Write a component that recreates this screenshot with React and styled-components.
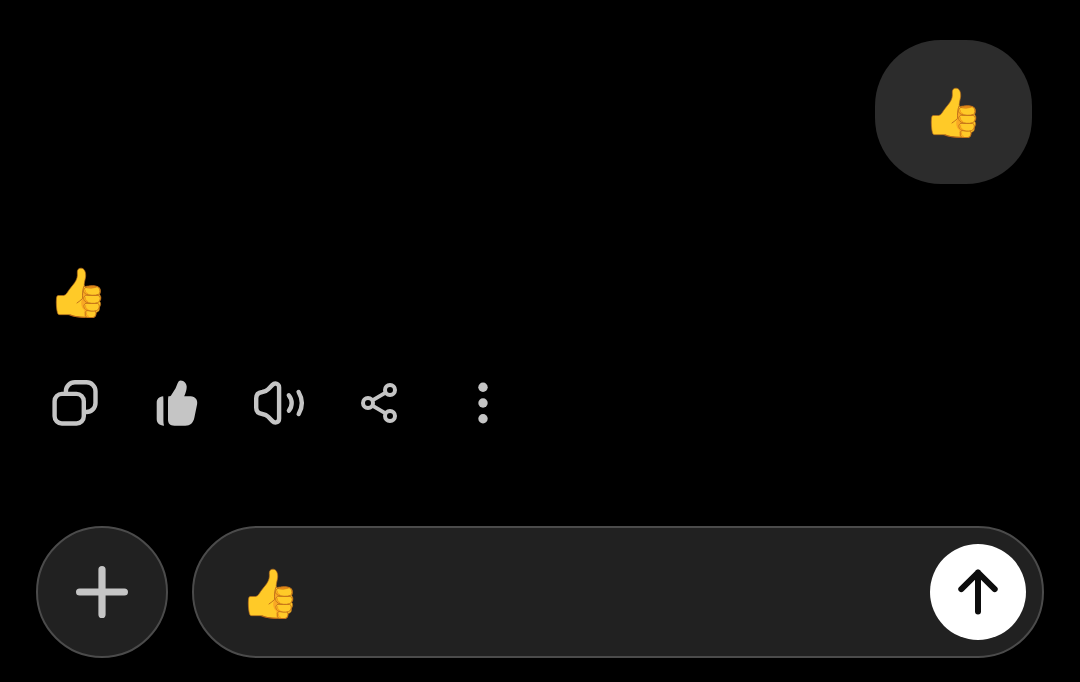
import React from "react";
import styled, { createGlobalStyle } from "styled-components";

const GlobalStyle = createGlobalStyle`
  * {
    box-sizing: border-box;
  }
  body {
    margin: 0;
    background: #000;
    font-family: Roboto, "Liberation Sans", sans-serif;
  }
`;

const Screen = styled.main`
  display: flex;
  flex-direction: column;
  width: 1080px;
  height: 682px;
  padding: 40px 36px 24px;
  overflow: hidden;
  background: #000;
`;

const UserMessage = styled.div`
  display: flex;
  align-items: center;
  align-self: flex-end;
  justify-content: center;
  width: 157px;
  height: 144px;
  margin-right: 12px;
  padding-top: 2px;
  border-radius: 66px;
  background: #2c2c2c;
`;

const Reply = styled.div`
  display: flex;
  margin: 82px 0 0 19px;
`;

const Actions = styled.div`
  display: flex;
  margin: 41px 0 0 -12px;
`;

const IconButton = styled.button`
  display: flex;
  align-items: center;
  justify-content: center;
  width: 102px;
  height: 84px;
  padding: 0;
  border: none;
  background: none;
  color: #c5c5c5;
`;

const Composer = styled.div`
  display: flex;
  gap: 24px;
  margin-top: auto;
`;

const AddButton = styled(IconButton)`
  width: 132px;
  height: 132px;
  border: 2px solid #4b4b4b;
  border-radius: 50%;
  background: #212121;
`;

const Field = styled.div`
  display: flex;
  flex: 1;
  align-items: center;
  justify-content: space-between;
  height: 132px;
  padding: 0 16px 0 53px;
  border: 2px solid #4b4b4b;
  border-radius: 66px;
  background: #212121;
`;

const Draft = styled.div`
  display: flex;
  padding-top: 4px;
`;

const SendButton = styled(IconButton)`
  width: 96px;
  height: 96px;
  border-radius: 50%;
  background: #fff;
  color: #0d0d0d;
`;

const Icon = styled.svg`
  display: block;
  flex: none;
  width: ${(props) => props.$size || 60}px;
  height: ${(props) => props.$size || 60}px;
  fill: none;
  stroke: currentColor;
  stroke-width: ${(props) => props.$stroke || 4.4};
  stroke-linecap: round;
  stroke-linejoin: round;
`;

const Emoji = styled.svg`
  display: block;
  flex: none;
  width: 48px;
  height: 54px;
`;

const ThumbsUp = () => (
  <Emoji viewBox="0 0 144 162" role="img" aria-label="thumbs up">
    <path
      d="M78 6.5C70 6.5 66 12 67 20C68 31 66 40 59 50C52 60 42 70 36 81Q32 88 26 88.500H9Q5 89 4.500 96C3 112 4.500 130 7.500 141Q9 146.500 14 146H39C50 146 54 151 67 152.500C81 155 96 154.500 110 154.500C120 155.500 124 150 123 140C131 138 135 132 133 124C138 119 138 111 134 106C139 100 139 91 134 86C137 80 138 69 132 64C124 58 104 58 89 62C85 55 91 42 92 31C93 16 87 6.500 78 6.500Z"
      fill="#ffca28"
      stroke="#b56d1c"
      strokeWidth="2"
    />
    <path d="M82 97C76 108 78 126 88 132L89 152H100L98 66H86Z" fill="#f9a825" />
    <g fill="#ffca28" stroke="#bd6717" strokeWidth="2.600" strokeLinejoin="round">
      <path d="M95 134H118Q124 135 123 143Q122 154 114 154.500H99Q92 154 91 148Q89 136 95 134Z" />
      <path d="M93 112H128Q134 114 133 123Q132 132 124 134C113 137 103 135 95 132C85 128 84 115 93 112Z" />
      <path d="M94 88H129Q137 90 136 98Q135 108 128 110C116 114 103 112 93 108C83 103 85 89 94 88Z" />
      <path d="M89 67C96 59 127 57 132 66C136 73 136 81 131 85C119 90 103 88 93 84C85 81 84 74 89 67Z" />
    </g>
    <g fill="none" stroke="#f59f1d" strokeWidth="3.500" strokeLinecap="round">
      <path d="M91 73C89 78 93 81 98 83M91 95C89 101 92 104 98 107M92 119C90 125 94 129 99 131M95 140C93 145 95 150 100 151" />
    </g>
    <path
      d="M66 111C72 107 77 103 83 97C82 84 82 73 87 60"
      fill="none"
      stroke="#b86518"
      strokeWidth="2.600"
      strokeLinecap="round"
    />
    <path
      d="M91 64C100 68 116 67 127 62C113 59 101 60 91 64Z"
      fill="#ed9418"
      stroke="#bd6717"
      strokeWidth="1.500"
    />
    <path
      d="M44 146C53 151 70 153 90 154"
      fill="none"
      stroke="#b86518"
      strokeWidth="3.500"
    />
  </Emoji>
);

const CopyIcon = () => (
  <Icon viewBox="0 0 60 60">
    <rect x="9.6" y="20.9" width="29.2" height="29.6" rx="7.3" />
    <path
      d="M20.9 20V18.2A9 9 0 0 1 29.900 9.300H41.5A9 9 0 0 1 50.5 18.300V30A9 9 0 0 1 41.5 39H39.5"
      strokeLinecap="butt"
    />
  </Icon>
);

const LikedIcon = () => (
  <Icon viewBox="0 0 60 60">
    <g fill="currentColor" stroke="none">
      <path d="M16.2 23.3C12 23.8 9.7 26 9.7 30V46C9.7 50 12.2 52.2 17 52.7C16.6 51 16.4 49.5 16.4 47.5V28.5C16.4 26.5 16.4 25 16.2 23.3Z" />
      <path d="M21.4 23.3H22.2C23.3 23.3 23.9 22.8 24.5 21.8L28.6 15.2L30.4 10.8C31.2 8.6 32.2 7.4 33.7 7.4C37.2 7.4 39.7 10.4 39.7 13.8C39.7 16.5 38.8 20 37.2 23.3H43.7C48.2 23.3 51 27 50.1 31.3L47.4 44.5C46.3 50 43.3 52.7 38.3 52.7H27.5C22.8 52.7 21 50.3 21 46.5V28C21 26.3 21.1 24.8 21.4 23.3Z" />
    </g>
  </Icon>
);

const SpeakerIcon = () => (
  <Icon viewBox="0 0 60 60">
    <path d="M30.1 14.5V45.5C30.1 49.4 26.1 50.9 23.2 47.9L19.2 43.8C17.6 42.1 15.8 41.4 13.3 41C9.5 40.5 7.2 38.4 7.2 34.8V25.2C7.2 21.6 9.5 19.5 13.3 19C15.8 18.600 17.6 17.900 19.2 16.2L23.2 12.100C26.1 9.100 30.1 10.600 30.1 14.5Z" />
    <path d="M39.800 22.3C43.600 26.8 43.600 33.2 39.900 37.7M49.600 19C53.700 26 53.700 34 49.700 41" />
  </Icon>
);

const ShareIcon = () => (
  <Icon viewBox="0 0 60 60" $stroke={4}>
    <circle cx="17" cy="30" r="5" />
    <circle cx="39" cy="17" r="5" />
    <circle cx="39" cy="43" r="5" />
    <path d="M21.4 27.4L34.6 19.6M21.4 32.6L34.6 40.4" strokeLinecap="butt" />
  </Icon>
);

const MoreIcon = () => (
  <Icon viewBox="0 0 60 60">
    <g fill="currentColor" stroke="none">
      <circle cx="30" cy="14.3" r="4.7" />
      <circle cx="30" cy="30" r="4.7" />
      <circle cx="30" cy="45.7" r="4.7" />
    </g>
  </Icon>
);

const actions = [
  { label: "Copy", icon: <CopyIcon /> },
  { label: "Good response", icon: <LikedIcon /> },
  { label: "Read aloud", icon: <SpeakerIcon /> },
  { label: "Share", icon: <ShareIcon /> },
  { label: "More", icon: <MoreIcon /> },
];

export default function App() {
  return (
    <>
      <GlobalStyle />
      <Screen>
        <UserMessage>
          <ThumbsUp />
        </UserMessage>
        <Reply>
          <ThumbsUp />
        </Reply>
        <Actions>
          {actions.map((el) => (
            <IconButton key={el.label} aria-label={el.label}>
              {el.icon}
            </IconButton>
          ))}
        </Actions>
        <Composer>
          <AddButton aria-label="Add">
            <Icon viewBox="0 0 60 60" $stroke={7.2}>
              <path d="M30 7.6V52.4M7.6 30H52.4" />
            </Icon>
          </AddButton>
          <Field>
            <Draft>
              <ThumbsUp />
            </Draft>
            <SendButton aria-label="Send">
              <Icon viewBox="0 0 96 96" $size={96} $stroke={6}>
                <path d="M48 67.4V28.6M31.3 45.1L48 28.6L64.7 45.1" />
              </Icon>
            </SendButton>
          </Field>
        </Composer>
      </Screen>
    </>
  );
}
